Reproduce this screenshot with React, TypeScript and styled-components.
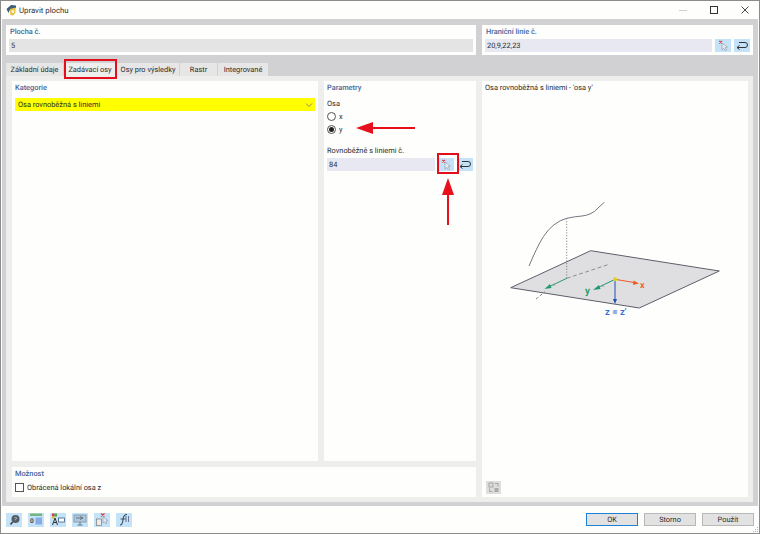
import React from "react";
import styled, { createGlobalStyle } from "styled-components";

const Global = createGlobalStyle`
  html, body { margin: 0; padding: 0; width: 760px; height: 534px; overflow: hidden; background: #fff; }
  * { box-sizing: border-box; }
  body { font-family: Roboto, "Noto Sans", sans-serif; font-size: 7.4px; color: #222; text-rendering: geometricPrecision; }
`;

const Window = styled.div`
  position: relative;
  width: 760px;
  height: 534px;
  border: 1px solid #8c8c8c;
  display: flex;
  flex-direction: column;
  background: #fefefc;
`;
const TitleBar = styled.div`
  height: 18px;
  flex: none;
  display: flex;
  align-items: center;
  padding: 0 0 0 5px;
  gap: 2px;
  font-size: 7.8px;
  color: #333;
`;
const TitleText = styled.span`
  flex: 1;
`;
const WinBtn = styled.span`
  width: 29px;
  height: 18px;
  display: flex;
  align-items: center;
  justify-content: center;
`;
const Body = styled.div`
  height: 487px;
  flex: none;
  width: 756px;
  margin-left: 1px;
  background: #d1d1d3;
  padding: 6px 5px 4px 4px;
  display: flex;
  flex-direction: column;
`;
const TopRow = styled.div`
  display: flex;
  gap: 6px;
  height: 30px;
`;
const TopCard = styled.div<{ $w: number }>`
  width: ${(p) => p.$w}px;
  background: #fefefc;
  padding: 1px 3px 0 3px;
`;
const BlueLabel = styled.div<{ $indent?: number }>`
  font-size: 7.4px;
  line-height: 11px;
  height: 11px;
  padding-left: ${(p) => p.$indent ?? 0}px;
  color: #45659a;
  font-weight: 500;
`;
const FieldRow = styled.div<{ $mt: number }>`
  display: flex;
  gap: 3px;
  margin-top: ${(p) => p.$mt}px;
  height: 13px;
`;
const Field = styled.div<{ $bg: string }>`
  flex: 1;
  height: 13px;
  background: ${(p) => p.$bg};
  line-height: 13px;
  padding-left: 2px;
  font-size: 7.4px;
  color: #2c2c2c;
`;
const IconBtn = styled.div`
  flex: 0 0 16px;
  height: 13px;
  background: #c4e2f8;
  display: flex;
  align-items: center;
  justify-content: center;
`;
const Tabs = styled.div`
  display: flex;
  margin-top: 8px;
  height: 13px;
`;
const Tab = styled.div<{ $active?: boolean; $w: number }>`
  width: ${(p) => p.$w}px;
  margin-right: 1px;
  background: ${(p) => (p.$active ? "#eeeeec" : "#e6e6e6")};
  text-align: center;
  white-space: nowrap;
  line-height: 14px;
  font-size: 7.4px;
  color: #2c2c2c;
`;
const TabPanel = styled.div`
  height: 426px;
  background: #eeeeec;
  padding: 5px 5px 5px 6px;
  display: grid;
  grid-template-columns: 306px 152px 266px;
  grid-template-rows: 380px 30px;
  column-gap: 6px;
  row-gap: 6px;
  width: 747px;
`;
const Panel = styled.div`
  background: #fefefc;
  padding: 1px 3px 0 3px;
`;
const RightPanel = styled(Panel)`
  grid-column: 3;
  grid-row: 1 / span 2;
  font-size: 7.4px;
  line-height: 11px;
  display: flex;
  flex-direction: column;
  color: #2c2c2c;
`;
const OptionPanel = styled(Panel)`
  grid-column: 1 / span 2;
`;
const Select = styled.div`
  margin-top: 5px;
  height: 13px;
  background: #ffff00;
  display: flex;
  align-items: center;
  justify-content: space-between;
  padding: 0 2px 0 3px;
  font-size: 7.4px;
  color: #2c2c2c;
`;
const SmallLabel = styled.div<{ $mt: number }>`
  margin-top: ${(p) => p.$mt}px;
  font-size: 7.4px;
  line-height: 11px;
  color: #2c2c2c;
`;
const RadioRow = styled.div`
  display: flex;
  align-items: center;
  gap: 3px;
  height: 11px;
  margin-top: 2px;
  font-size: 7.4px;
  color: #2c2c2c;
`;
const Radio = styled.span<{ $on?: boolean }>`
  width: 9px;
  height: 9px;
  border-radius: 50%;
  border: 1px solid #555;
  background: #fff;
  display: flex;
  align-items: center;
  justify-content: center;
  &::after {
    content: "";
    width: 5px;
    height: 5px;
    border-radius: 50%;
    background: ${(p) => (p.$on ? "#222" : "transparent")};
  }
`;
const Spacer = styled.div`
  flex: 1;
`;
const DisabledBtn = styled.div`
  width: 15px;
  height: 13px;
  flex: none;
  background: #dedede;
  margin: 0 0 3px 1px;
  display: flex;
  align-items: center;
  justify-content: center;
`;
const CheckRow = styled.div`
  display: flex;
  align-items: center;
  gap: 3px;
  margin-top: 4px;
  height: 9px;
  font-size: 7.4px;
  color: #2c2c2c;
`;
const Check = styled.span`
  width: 9px;
  height: 9px;
  border: 1px solid #555;
  background: #fff;
`;
const Footer = styled.div`
  flex: 1;
  display: flex;
  align-items: center;
  padding: 0 5px 0 5px;
`;
const FootIcons = styled.div`
  display: flex;
  gap: 6px;
  flex: 1;
`;
const FootIcon = styled.div`
  width: 16px;
  height: 14px;
  background: #c4e2f8;
  display: flex;
  align-items: center;
  justify-content: center;
`;
const Buttons = styled.div`
  display: flex;
  gap: 6px;
`;
const Btn = styled.div<{ $primary?: boolean }>`
  width: 52px;
  height: 13px;
  background: #e2e2e2;
  border: 1px solid ${(p) => (p.$primary ? "#1a80d8" : "#b8b8b8")};
  text-align: center;
  line-height: 11px;
  font-size: 7.4px;
  color: #2c2c2c;
`;
const Grip = styled.svg`
  position: absolute;
  right: 0;
  bottom: 0;
`;
const Highlight = styled.div<{ $x: number; $y: number; $w: number; $h: number }>`
  position: absolute;
  left: ${(p) => p.$x - 1}px;
  top: ${(p) => p.$y - 1}px;
  width: ${(p) => p.$w}px;
  height: ${(p) => p.$h}px;
  border: 2px solid #e30f1d;
`;
const Overlay = styled.svg`
  position: absolute;
  left: -1px;
  top: -1px;
  pointer-events: none;
`;
const Diagram = styled.svg`
  display: block;
  flex: none;
  margin: 97px 0 0 15px;
`;

const Pick = () => (
  <svg width="12" height="11" viewBox="0 0 12 11">
    <path d="M5 3 L5 10 L6.8 8.3 L8.3 10.8 L9.6 10 L8.2 7.6 L10.4 7.2 Z" fill="#e8ecf0" stroke="#98a0ac" strokeWidth="0.7" />
    <path d="M2.2 0.8 L5 3.4 M5 0.8 L2.2 3.4" stroke="#e0343c" strokeWidth="1.1" />
  </svg>
);
const Undo = () => (
  <svg width="13" height="10" viewBox="0 0 13 10">
    <path d="M3 1.5 H9 A2.5 2.5 0 0 1 9 6.5 H1.5" fill="none" stroke="#333" strokeWidth="1" />
    <path d="M3.5 4.5 L1 6.5 L3.5 8.5" fill="none" stroke="#333" strokeWidth="1" />
  </svg>
);
const Chevron = () => (
  <svg width="8" height="6" viewBox="0 0 8 6">
    <path d="M1 1.5 L4 4.5 L7 1.5" fill="none" stroke="#777" strokeWidth="0.8" />
  </svg>
);

const AppLogo = () => (
  <svg width="11" height="12" viewBox="0 0 11 12">
    <path d="M0.5 5 L5 1 L10 1.5 L10 4 L4 5.5 L2.5 9 Z" fill="#37607f" />
    <path d="M4 5 L9.5 3.5 L9.5 8.5 Q8 11.5 6 11.5 Q4 11 4 8.5 Z" fill="#e8c23a" />
    <circle cx="6.8" cy="7.5" r="1.6" fill="#f6f2d8" />
  </svg>
);

const footIcons = [
  <svg key="a" width="13" height="12" viewBox="0 0 13 12"><circle cx="7.5" cy="5" r="4" fill="#555d68" /><path d="M6.3 4 Q7.5 2.6 8.7 4 Q8.7 5 7.5 5.4 V6.2" fill="none" stroke="#c4d4e2" strokeWidth="0.8" /><path d="M4.5 8 L2.5 10.5" stroke="#444" strokeWidth="1.6" /></svg>,
  <svg key="b" width="14" height="13" viewBox="0 0 14 13"><rect x="1" y="0.5" width="12" height="2.5" fill="#74b47e" /><text x="1" y="10" fontSize="6.5" fontFamily="Roboto" fontWeight="700" fill="#3a4656">0</text><rect x="6.5" y="4.5" width="6.5" height="7" fill="#86ace4" /></svg>,
  <svg key="c" width="14" height="13" viewBox="0 0 14 13"><rect x="1" y="0.5" width="2.5" height="3" fill="#d83a3a" /><rect x="3.5" y="0.5" width="2.5" height="3" fill="#4aa34f" /><rect x="1" y="3.5" width="2.5" height="2" fill="#e0c030" /><path d="M4 5 L1.5 12 M4 5 L6.5 12 M2.5 9.5 H5.5" stroke="#333" strokeWidth="1" fill="none" /><rect x="7.5" y="5" width="6" height="4" fill="#fff" stroke="#3a5f8a" strokeWidth="0.8" /></svg>,
  <svg key="d" width="14" height="12" viewBox="0 0 14 12"><rect x="1" y="1" width="12" height="7" fill="#b0c8da" stroke="#7a92a4" strokeWidth="0.8" /><path d="M3 4 H10 M7 2.5 L10 4 L7 5.5 M7 8 V11 M4.5 11 H9.5" stroke="#56707f" strokeWidth="0.9" fill="none" /></svg>,
  <svg key="e" width="14" height="13" viewBox="0 0 14 13"><path d="M6 0.5 L9.5 3.5 M9.5 0.5 L6 3.5" stroke="#d83a3a" strokeWidth="1.1" /><rect x="1.5" y="6" width="5" height="6.5" fill="#ececec" stroke="#777" strokeWidth="0.7" /><path d="M8 4 V10 L9.5 8.8 L11 11 L12 10 L10.8 8 L13 7.6 Z" fill="#e8ecf0" stroke="#8a93a0" strokeWidth="0.6" /></svg>,
  <svg key="f" width="14" height="13" viewBox="0 0 14 13"><path d="M3 12 Q5.5 12 6 6.5 Q6.5 1.5 10 1.5" stroke="#3a4a5c" strokeWidth="1.1" fill="none" /><path d="M3.5 6 H8.5" stroke="#3a4a5c" strokeWidth="0.9" /><path d="M9 3 V9 M11.5 3 V9" stroke="#5a6a80" strokeWidth="0.9" /></svg>,
];

export default function App() {
  return (
    <>
      <Global />
      <Window>
        <TitleBar>
          <AppLogo />
          <TitleText>Upravit plochu</TitleText>
          <WinBtn>
            <svg width="10" height="10" viewBox="0 0 10 10"><path d="M1 5.5 H9" stroke="#d0d0d0" strokeWidth="1" /></svg>
          </WinBtn>
          <WinBtn>
            <svg width="10" height="10" viewBox="0 0 10 10"><rect x="1.5" y="1.5" width="7" height="7" fill="none" stroke="#333" strokeWidth="1" /></svg>
          </WinBtn>
          <WinBtn>
            <svg width="10" height="10" viewBox="0 0 10 10"><path d="M1.5 1.5 L8.5 8.5 M8.5 1.5 L1.5 8.5" stroke="#333" strokeWidth="0.9" /></svg>
          </WinBtn>
        </TitleBar>
        <Body>
          <TopRow>
            <TopCard $w={470}>
              <BlueLabel $indent={1}>Plocha č.</BlueLabel>
              <FieldRow $mt={2}>
                <Field $bg="#e4e4e4">5</Field>
              </FieldRow>
            </TopCard>
            <TopCard $w={271}>
              <BlueLabel $indent={1}>Hraniční linie č.</BlueLabel>
              <FieldRow $mt={2}>
                <Field $bg="#e8e8f2">20,9,22,23</Field>
                <IconBtn><Pick /></IconBtn>
                <IconBtn><Undo /></IconBtn>
              </FieldRow>
            </TopCard>
          </TopRow>
          <Tabs>
            <Tab $w={57}>Základní údaje</Tab>
            <Tab $active $w={52}>Zadávací osy</Tab>
            <Tab $w={62}>Osy pro výsledky</Tab>
            <Tab $w={37}>Rastr</Tab>
            <Tab $w={50}>Integrované</Tab>
          </Tabs>
          <TabPanel>
            <Panel>
              <BlueLabel>Kategorie</BlueLabel>
              <Select>
                Osa rovnoběžná s liniemi
                <Chevron />
              </Select>
            </Panel>
            <Panel>
              <BlueLabel>Parametry</BlueLabel>
              <SmallLabel $mt={5}>Osa</SmallLabel>
              <RadioRow><Radio />x</RadioRow>
              <RadioRow><Radio $on />y</RadioRow>
              <SmallLabel $mt={10}>Rovnoběžně s liniemi č.</SmallLabel>
              <FieldRow $mt={2}>
                <Field $bg="#e8e8f2">84</Field>
                <IconBtn><Pick /></IconBtn>
                <IconBtn><Undo /></IconBtn>
              </FieldRow>
            </Panel>
            <RightPanel>
              Osa rovnoběžná s liniemi - 'osa y'
              <Diagram width="230" height="135" viewBox="500 190 230 135">
                <path d="M510.7 287.7 L590.7 250.7 L719.3 271 L639.3 308 Z" fill="#dfdfe2" stroke="#5e5e6a" strokeWidth="1" />
                <path d="M529 266 Q537 247 543.3 236.7 Q553 222 566.7 218.3 Q575 216.5 582 216 Q592 215 598 208 L604.3 202.3" fill="none" stroke="#777784" strokeWidth="1" />
                <path d="M566.7 218.3 V278.3" stroke="#6a6a76" strokeWidth="0.8" strokeDasharray="1.2 1.6" />
                <path d="M566.7 278.3 L610 264" stroke="#77777f" strokeWidth="0.8" strokeDasharray="4 2.5" />
                <path d="M536 299 L545 291.7" stroke="#66666f" strokeWidth="0.8" strokeDasharray="3 2" />
                <path d="M566.7 278.3 L548 287.3" stroke="#1f9a6a" strokeWidth="1" />
                <path d="M550 284 L544.5 289 L551.5 288 Z" fill="#1f9a6a" />
                <path d="M615 279.3 L597 288" stroke="#1f9a6a" strokeWidth="1" />
                <path d="M599 285 L593 290 L600.5 289 Z" fill="#1f9a6a" />
                <path d="M615 279.3 L634 282.5" stroke="#ee5a24" strokeWidth="1" />
                <path d="M633.5 280.5 L639 283.5 L633 285 Z" fill="#ee5a24" />
                <path d="M615 279.3 V300" stroke="#1f4fb4" strokeWidth="1" />
                <path d="M613 299 L615 304 L617 299 Z" fill="#1f4fb4" />
                <circle cx="615" cy="279.3" r="2" fill="#d9d320" />
                <text x="553" y="286" fontSize="5" fontFamily="Roboto" fill="#999">x</text>
                <text x="602" y="287" fontSize="5" fontFamily="Roboto" fill="#999">x</text>
                <text x="640" y="288" fontSize="9" fontFamily="Roboto" fontWeight="600" fill="#ee5a24">x</text>
                <text x="585" y="294" fontSize="10" fontFamily="Roboto" fontWeight="600" fill="#1f9a6a">y</text>
                <text x="605" y="315" fontSize="9.5" fontFamily="Roboto" fontWeight="600" fill="#3a6fd0">z = z'</text>
              </Diagram>
              <Spacer />
              <DisabledBtn>
                <svg width="12" height="11" viewBox="0 0 12 11">
                  <rect x="1" y="1" width="4" height="4" fill="none" stroke="#999" strokeWidth="0.8" />
                  <rect x="6.5" y="6" width="4" height="4" fill="#aaa" />
                  <path d="M7 1.5 H10 V4.5 M1.5 6.5 V9.5 H4.5" fill="none" stroke="#999" strokeWidth="0.8" />
                </svg>
              </DisabledBtn>
            </RightPanel>
            <OptionPanel>
              <BlueLabel>Možnost</BlueLabel>
              <CheckRow><Check />Obrácená lokální osa z</CheckRow>
            </OptionPanel>
          </TabPanel>
        </Body>
        <Footer>
          <FootIcons>
            {footIcons.map((i, n) => (
              <FootIcon key={n}>{i}</FootIcon>
            ))}
          </FootIcons>
          <Buttons>
            <Btn $primary>OK</Btn>
            <Btn>Storno</Btn>
            <Btn>Použít</Btn>
          </Buttons>
        </Footer>
        <Grip width="7" height="7" viewBox="0 0 7 7">
          <path d="M5 1h1v1H5zM3 3h1v1H3zM5 3h1v1H5zM1 5h1v1H1zM3 5h1v1H3zM5 5h1v1H5z" fill="#b0b0b0" />
        </Grip>
        <Highlight $x={64} $y={59} $w={53} $h={20} />
        <Highlight $x={437} $y={153} $w={22} $h={21} />
        <Overlay width="760" height="534" viewBox="0 0 760 534">
          <path d="M415 128 H372" stroke="#e8101c" strokeWidth="2" />
          <path d="M356 128 L373 122 V134 Z" fill="#e8101c" />
          <path d="M448 225 V193" stroke="#e8101c" strokeWidth="2" />
          <path d="M448 178 L442 195 H454 Z" fill="#e8101c" />
        </Overlay>
      </Window>
    </>
  );
}
